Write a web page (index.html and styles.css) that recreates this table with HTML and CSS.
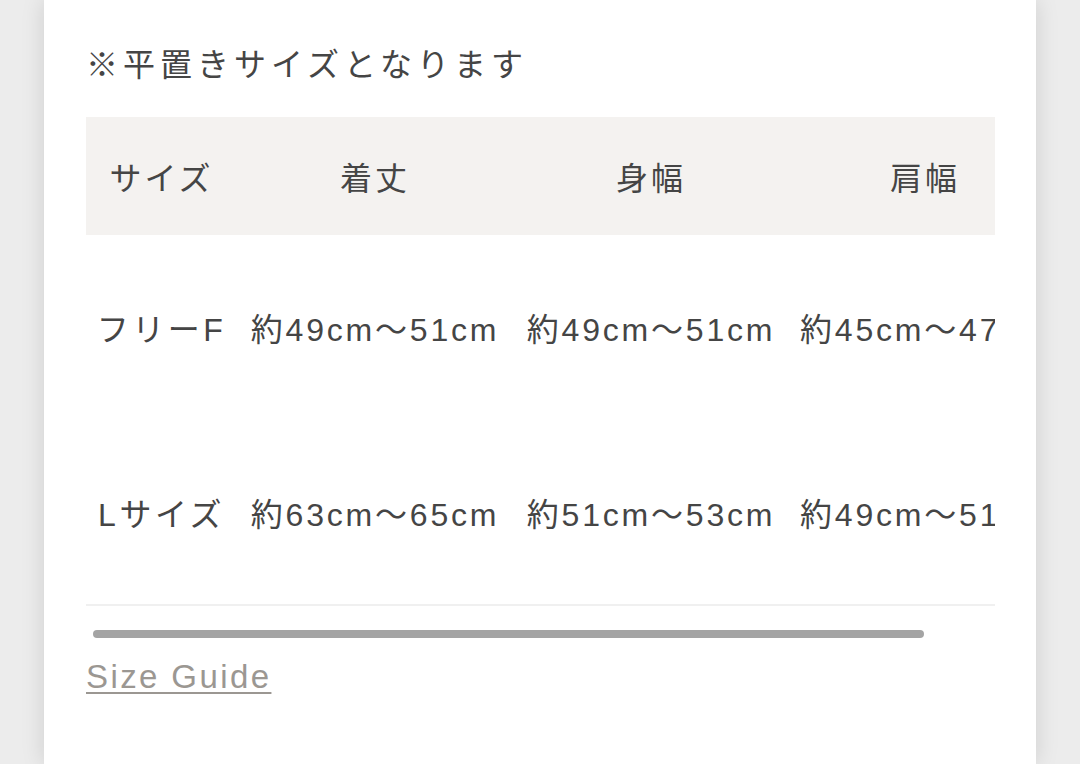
FILE: index.html
```html
<!DOCTYPE html>
<html lang="ja">
<head>
<meta charset="utf-8">
<title>サイズ</title>
<link rel="stylesheet" href="styles.css">
</head>
<body>
<main class="card">
  <p class="note">※平置きサイズとなります</p>
  <div class="table-wrap">
    <table class="size-table">
      <colgroup>
        <col class="c1"><col class="c2"><col class="c3"><col class="c4">
      </colgroup>
      <thead>
        <tr class="head-row">
          <th>サイズ</th><th>着丈</th><th>身幅</th><th>肩幅</th>
        </tr>
      </thead>
      <tbody>
        <tr class="data-row">
          <td>フリーF</td><td>約49cm〜51cm</td><td>約49cm〜51cm</td><td>約45cm〜47cm</td>
        </tr>
        <tr class="data-row last">
          <td>Lサイズ</td><td>約63cm〜65cm</td><td>約51cm〜53cm</td><td>約49cm〜51cm</td>
        </tr>
      </tbody>
    </table>
  </div>
  <div class="scroll-thumb"></div>
  <a class="guide" href="#">Size Guide</a>
</main>
</body>
</html>
```

FILE: styles.css
```css
html, body {
  margin: 0;
  padding: 0;
}
body {
  background: #ececec;
  font-family: "Liberation Sans", "Noto Sans CJK JP", sans-serif;
  color: #454545;
  overflow: hidden;
}
.card {
  box-sizing: border-box;
  width: 992px;
  min-height: 764px;
  margin: 0 auto;
  background: #ffffff;
  padding: 42px 41px 0 42px;
  box-shadow: 0 0 22px rgba(0, 0, 0, 0.13);
}
.note {
  margin: 0 0 35px;
  font-family: "Noto Sans CJK JP", sans-serif;
  font-size: 32px;
  line-height: 40px;
  letter-spacing: 5px;
  color: #454545;
  white-space: nowrap;
}
.table-wrap {
  width: 909px;
  overflow: hidden;
  border-bottom: 2px solid #f0f0f0;
}
.size-table {
  border-collapse: collapse;
  table-layout: fixed;
  width: 1105px;
}
.c1 { width: 151px; }
.c2 { width: 276px; }
.c3 { width: 276px; }
.c4 { width: 402px; }
.size-table th,
.size-table td {
  padding: 0;
  white-space: nowrap;
  vertical-align: middle;
  font-weight: 400;
}
.size-table td:last-child {
  text-align: left;
  padding-left: 11px;
}
.head-row {
  background: #f4f2f0;
  height: 118px;
}
.head-row th {
  font-family: "Noto Sans CJK JP", sans-serif;
  font-size: 32px;
  letter-spacing: 3px;
  text-align: center;
  color: #454545;
}
.head-row th:last-child {
  text-align: left;
  padding-left: 101px;
}
.data-row {
  height: 184px;
}
.data-row.last {
  height: 185px;
}
.data-row td {
  font-size: 32px;
  letter-spacing: 2.8px;
  text-align: center;
  color: #454545;
}
.data-row td:first-child {
  letter-spacing: 3.5px;
}
.scroll-thumb {
  width: 831px;
  height: 8px;
  margin: 24px 0 0 7px;
  border-radius: 4px;
  background: #a4a4a4;
}
.guide {
  display: inline-block;
  margin-top: 19px;
  font-family: "Liberation Sans", sans-serif;
  font-size: 33px;
  line-height: 40px;
  letter-spacing: 2.4px;
  color: #9b9792;
  text-decoration: underline;
  text-decoration-thickness: 2px;
  text-underline-offset: 4px;
}
```
